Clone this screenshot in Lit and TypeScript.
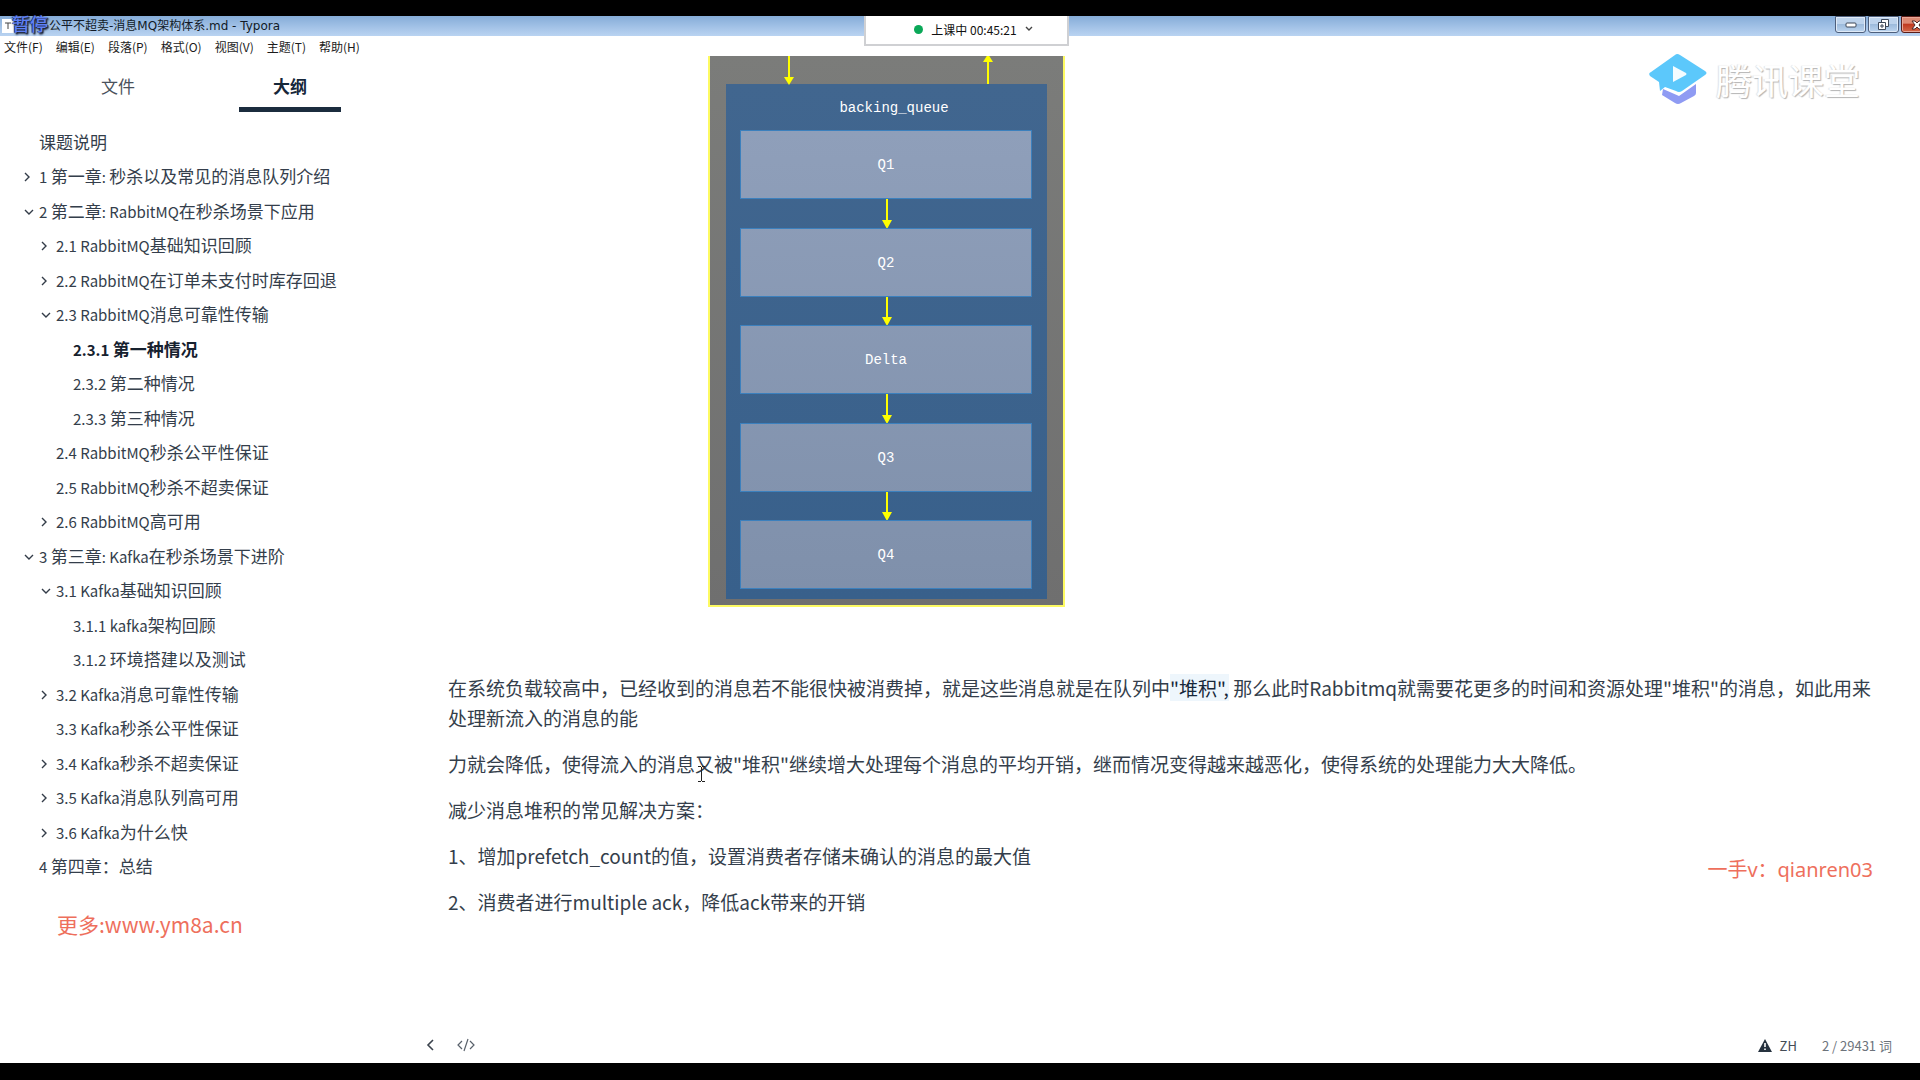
import { LitElement, html, svg, css, nothing } from "lit";
import { customElement } from "lit/decorators.js";
import { classMap } from "lit/directives/class-map.js";

type Fold = "open" | "closed" | "none";
interface OutlineItem {
  text: string;
  level: 0 | 1 | 2;
  fold: Fold;
  current?: boolean;
}

const item = (level: 0 | 1 | 2, fold: Fold, text: string, current = false): OutlineItem => ({ level, fold, text, current });

const OUTLINE: OutlineItem[] = [
  item(0, "none", "课题说明"),
  item(0, "closed", "1 第一章: 秒杀以及常见的消息队列介绍"),
  item(0, "open", "2 第二章: RabbitMQ在秒杀场景下应用"),
  item(1, "closed", "2.1 RabbitMQ基础知识回顾"),
  item(1, "closed", "2.2 RabbitMQ在订单未支付时库存回退"),
  item(1, "open", "2.3 RabbitMQ消息可靠性传输"),
  item(2, "none", "2.3.1 第一种情况", true),
  item(2, "none", "2.3.2 第二种情况"),
  item(2, "none", "2.3.3 第三种情况"),
  item(1, "none", "2.4 RabbitMQ秒杀公平性保证"),
  item(1, "none", "2.5 RabbitMQ秒杀不超卖保证"),
  item(1, "closed", "2.6 RabbitMQ高可用"),
  item(0, "open", "3 第三章: Kafka在秒杀场景下进阶"),
  item(1, "open", "3.1 Kafka基础知识回顾"),
  item(2, "none", "3.1.1 kafka架构回顾"),
  item(2, "none", "3.1.2 环境搭建以及测试"),
  item(1, "closed", "3.2 Kafka消息可靠性传输"),
  item(1, "none", "3.3 Kafka秒杀公平性保证"),
  item(1, "closed", "3.4 Kafka秒杀不超卖保证"),
  item(1, "closed", "3.5 Kafka消息队列高可用"),
  item(1, "closed", "3.6 Kafka为什么快"),
  item(0, "none", "4 第四章：总结"),
];

const MENUS = ["文件(F)", "编辑(E)", "段落(P)", "格式(O)", "视图(V)", "主题(T)", "帮助(H)"];

const QUEUES = [
  { name: "Q1", y: 74 },
  { name: "Q2", y: 172 },
  { name: "Delta", y: 269 },
  { name: "Q3", y: 367 },
  { name: "Q4", y: 464 },
];

/** Sets the Latin runs of an outline entry in their own, smaller size. */
const mixed = (text: string) =>
  text
    .split(/([\x20-\x7e]+)/)
    .filter((run) => run !== "")
    .map((run) => (/^[\x20-\x7e]/.test(run) ? html`<span class="latin">${run}</span>` : run));

@customElement("queue-diagram")
export class QueueDiagram extends LitElement {
  static styles = css`
    :host {
      display: block;
    }
    .diagram {
      display: block;
    }
    .label {
      font: 14px "Liberation Mono", monospace;
      fill: #fff;
      text-anchor: middle;
    }
  `;

  render() {
    return html`
      <svg class="diagram" width="357" height="551" viewBox="0 0 357 551" role="img" aria-label="backing_queue">
        <defs>
          <linearGradient id="outer" x1="0" y1="0" x2="0" y2="1">
            <stop offset="0" stop-color="#7b7c7a" />
            <stop offset="1" stop-color="#6f6f6f" />
          </linearGradient>
          <linearGradient id="inner" x1="0" y1="0" x2="0" y2="1">
            <stop offset="0" stop-color="#41668f" />
            <stop offset="1" stop-color="#38608b" />
          </linearGradient>
          <linearGradient id="cell" gradientUnits="userSpaceOnUse" x1="0" y1="74" x2="0" y2="533">
            <stop offset="0" stop-color="#8f9fba" />
            <stop offset="1" stop-color="#7f90ab" />
          </linearGradient>
        </defs>
        <rect width="357" height="551" fill="url(#outer)" />
        <path d="M1 0V550H356V0" fill="none" stroke="#fdfa62" stroke-width="2" />
        <rect x="18" y="28" width="321" height="515" fill="url(#inner)" />
        <path d="M81 0V22" stroke="#ff0" stroke-width="2" />
        <path d="M76 21H86L81 29Z" fill="#ff0" />
        <path d="M280 28V5" stroke="#ff0" stroke-width="2" />
        <path d="M275 6H285L280 -2Z" fill="#ff0" />
        <text class="label" x="186" y="56">backing_queue</text>
        ${QUEUES.map(
          (q, i) => svg`
            <rect x="32.500" y=${q.y + 0.5} width="291" height="68" fill="url(#cell)" stroke="#3c80bd" />
            <text class="label" x="178" y=${q.y + 39}>${q.name}</text>
            ${i < QUEUES.length - 1
              ? svg`
                <path d=${`M179 ${q.y + 69}V${QUEUES[i + 1].y - 7}`} stroke="#ff0" stroke-width="2" />
                <path d=${`M174 ${QUEUES[i + 1].y - 8}H184L179 ${QUEUES[i + 1].y + 1}Z`} fill="#ff0" />`
              : nothing}
          `,
        )}
      </svg>
    `;
  }
}

@customElement("app-root")
export class AppRoot extends LitElement {
  static styles = css`
    :host {
      display: block;
      font-family: "Noto Sans CJK SC", sans-serif;
      color: #343e4b;
    }
    button {
      font: inherit;
      color: inherit;
      background: none;
      border: 0;
      margin: 0;
      padding: 0;
    }
    a {
      color: inherit;
      text-decoration: none;
    }
    .screen {
      position: relative;
      display: flex;
      flex-direction: column;
      box-sizing: border-box;
      min-height: 100vh;
      padding: 16px 0 17px;
      background: #000;
      overflow: hidden;
    }
    .window {
      flex: 1;
      display: flex;
      flex-direction: column;
      background: #fff;
    }
    .titlebar {
      display: flex;
      align-items: center;
      height: 20px;
      padding-left: 1px;
      background: linear-gradient(to bottom, #85acd8, #a5c4e8 60%, #b9d3f1);
      color: #111a26;
      overflow: hidden;
    }
    .doc-icon {
      flex: none;
      margin-right: 34px;
    }
    .title {
      flex: 1;
      margin: 0;
      font: 12px/18px "DejaVu Sans", "Noto Sans CJK SC", sans-serif;
      white-space: nowrap;
    }
    .window-buttons {
      display: flex;
      gap: 2px;
      align-self: flex-start;
      margin-right: -12px;
    }
    .window-button {
      display: grid;
      place-items: center;
      box-sizing: border-box;
      width: 31px;
      height: 17px;
      border: 1px solid #4d5f7c;
      border-radius: 0 0 3px 3px;
      background: linear-gradient(to bottom, #bdd3ec 45%, #9dbbdc 50%, #bcd5f0);
      box-shadow: inset 0 0 0 1px #dfeaf7;
    }
    .close {
      background: linear-gradient(to bottom, #dd8a74 40%, #c03a20 50%, #d4694a);
      border-color: #5a1d18;
      box-shadow: inset 0 0 0 1px #e9a797;
    }
    .menubar {
      display: flex;
      gap: 13px;
      height: 20px;
      padding-left: 4px;
      color: #1b1b1b;
      font: 12px/22px "Noto Sans CJK SC", sans-serif;
    }
    .body {
      flex: 1;
      display: grid;
      grid-template-columns: 415px 1fr;
    }
    .sidebar {
      display: flex;
      flex-direction: column;
    }
    .tabs {
      display: flex;
      gap: 70px;
      padding-left: 67px;
      margin-bottom: 12px;
    }
    .tab {
      box-sizing: border-box;
      width: 102px;
      height: 56px;
      padding-top: 9px;
      border-bottom: 5px solid transparent;
      font-size: 17px;
      line-height: 24px;
      color: #4a525c;
    }
    .tab.active {
      color: #16273a;
      border-color: #1b2c3e;
      font-weight: 700;
    }
    .outline {
      list-style: none;
      margin: 0;
      padding: 0 0 0 24px;
      font-size: 17px;
    }
    .node {
      display: flex;
      align-items: center;
      height: 34px;
      white-space: nowrap;
    }
    .node:nth-child(even) {
      height: 35px;
    }
    .latin {
      font-size: 15px;
    }
    .level-1 {
      padding-left: 17px;
    }
    .level-2 {
      padding-left: 34px;
    }
    .fold {
      flex: none;
      display: flex;
      align-items: center;
      width: 15px;
      height: 20px;
      padding-top: 3px;
    }
    .current {
      font-weight: 700;
      color: #16212e;
    }
    .document {
      display: flex;
      flex-direction: column;
      min-width: 0;
    }
    .article {
      flex: 1;
      padding: 0 46px 0 33px;
      font-size: 19px;
      line-height: 30px;
    }
    .figure {
      margin: 0 0 66px 260px;
    }
    .paragraph {
      margin: 0 0 16px;
    }
    .mark {
      background: #eef6fc;
      color: #16273a;
    }
    .statusbar {
      display: flex;
      align-items: center;
      height: 36px;
      padding: 0 28px 0 3px;
      font-size: 13px;
      color: #444c55;
    }
    .tool {
      display: grid;
      place-items: center;
      width: 24px;
      height: 24px;
      margin-right: 12px;
    }
    .status-right {
      display: flex;
      align-items: center;
      gap: 8px;
      margin-left: auto;
    }
    .words {
      margin-left: 17px;
      color: #6c737b;
    }
    .lesson {
      position: absolute;
      top: 16px;
      left: 45%;
      display: flex;
      align-items: center;
      justify-content: center;
      gap: 8px;
      box-sizing: border-box;
      width: 205px;
      height: 30px;
      padding: 0 0 2px 14px;
      border: 2px solid #cfd0d3;
      border-top: 0;
      background: #fff;
      color: #111;
      font-size: 12px;
    }
    .dot {
      width: 9px;
      height: 9px;
      border-radius: 50%;
      background: #0aa858;
    }
    .paused {
      position: absolute;
      top: 11px;
      left: 12px;
      color: #5f80f5;
      font-size: 18px;
      line-height: 24px;
      font-weight: 500;
      text-shadow: 1px 1px 1px #1a2238, -1px 0 1px #1a2238, 1px 2px 2px #1a2238;
    }
    .brand {
      position: absolute;
      top: 53px;
      right: 60px;
      display: flex;
      align-items: center;
      gap: 8px;
      color: #fff;
      font-size: 36px;
      line-height: 52px;
      text-shadow: 1px 1px 1px #b4b4b4, -1px 0 1px #e2e2e2;
    }
    .promo {
      position: absolute;
      color: #ee6f5c;
    }
    .promo-left {
      left: 57px;
      bottom: 140px;
      font: 21px/32px "Noto Sans CJK SC", sans-serif;
    }
    .promo-right {
      right: 47px;
      bottom: 196px;
      font: 20px/28px "Noto Sans", "Noto Sans CJK SC", sans-serif;
    }
    .pointer {
      position: absolute;
      left: 697px;
      top: 765px;
    }
  `;

  private chevron(fold: Fold) {
    if (fold === "none") return html`<span class="fold"></span>`;
    const d = fold === "open" ? "M1 6L5 10L9 6" : "M1 4L5 8L1 12";
    return html`
      <button class="fold" aria-label=${fold === "open" ? "折叠" : "展开"}>
        <svg width="11" height="16" viewBox="0 0 11 16" fill="none" stroke="#333c48" stroke-width="1.4">
          <path d=${d} />
        </svg>
      </button>
    `;
  }

  render() {
    return html`
      <div class="screen">
        <div class="window">
          <header class="titlebar">
            <svg class="doc-icon" width="14" height="16" viewBox="0 0 14 16">
              <path d="M1 1H10L13 4V15H1Z" fill="#fff" />
              <path d="M4 5H10M7 5V11" stroke="#444" fill="none" />
            </svg>
            <h1 class="title">公平不超卖-消息MQ架构体系.md - Typora</h1>
            <div class="window-buttons">
              <button class="window-button" aria-label="最小化">
                <svg width="12" height="6" viewBox="0 0 12 6">
                  <rect x="1" y="1" width="10" height="4" rx="1" fill="#fff" stroke="#3c4757" />
                </svg>
              </button>
              <button class="window-button" aria-label="还原">
                <svg width="13" height="12" viewBox="0 0 13 12" fill="#fff" stroke="#3c4757">
                  <path d="M4.500 .5H11.500V7.500H4.500Z" />
                  <path d="M1.500 3.500H8.500V10.500H1.500Z" />
                  <path d="M4 6H6V8H4Z" />
                </svg>
              </button>
              <button class="window-button close" aria-label="关闭">
                <svg width="12" height="10" viewBox="0 0 12 10">
                  <path d="M1 1H4L6 3L8 1H11L8 5L11 9H8L6 7L4 9H1L4 5Z" fill="#fff" stroke="#4b2a2a" />
                </svg>
              </button>
            </div>
          </header>
          <nav class="menubar">${MENUS.map((m) => html`<button>${m}</button>`)}</nav>
          <div class="body">
            <aside class="sidebar">
              <div class="tabs" role="tablist">
                <button class="tab" role="tab" aria-selected="false">文件</button>
                <button class="tab active" role="tab" aria-selected="true">大纲</button>
              </div>
              <ul class="outline">
                ${OUTLINE.map(
                  (n) => html`
                    <li class=${classMap({ node: true, [`level-${n.level}`]: true, current: !!n.current })}>
                      ${this.chevron(n.fold)}<a href="#">${mixed(n.text)}</a>
                    </li>
                  `,
                )}
              </ul>
            </aside>
            <main class="document">
              <article class="article">
                <figure class="figure"><queue-diagram></queue-diagram></figure>
                <p class="paragraph">
                  在系统负载较高中，已经收到的消息若不能很快被消费掉，就是这些消息就是在队列中<span class="mark">"堆积",</span
                  >&nbsp;那么此时Rabbitmq就需要花更多的时间和资源处理"堆积"的消息，如此用来处理新流入的消息的能
                </p>
                <p class="paragraph">
                  力就会降低，使得流入的消息又被"堆积"继续增大处理每个消息的平均开销，继而情况变得越来越恶化，使得系统的处理能力大大降低。
                </p>
                <p class="paragraph">减少消息堆积的常见解决方案：</p>
                <p class="paragraph">1、增加prefetch_count的值，设置消费者存储未确认的消息的最大值</p>
                <p class="paragraph">2、消费者进行multiple ack，降低ack带来的开销</p>
              </article>
              <footer class="statusbar">
                <button class="tool" aria-label="返回">
                  <svg width="10" height="14" viewBox="0 0 10 14" fill="none" stroke="#3b434d" stroke-width="1.6">
                    <path d="M8 2L3 7L8 12" />
                  </svg>
                </button>
                <button class="tool" aria-label="源代码模式">
                  <svg width="20" height="14" viewBox="0 0 20 14" fill="none" stroke="#59616b" stroke-width="1.2">
                    <path d="M6 3L2 7L6 11M14 3L18 7L14 11M12 1L8 13" />
                  </svg>
                </button>
                <div class="status-right">
                  <svg width="14" height="13" viewBox="0 0 14 13">
                    <path d="M7 0L14 13H0Z" fill="#26323f" />
                    <path d="M7 4V8M7 9.500V11" stroke="#fff" stroke-width="1.6" />
                  </svg>
                  <span>ZH</span>
                  <span class="words">2 / 29431 词</span>
                </div>
              </footer>
            </main>
          </div>
        </div>

        <button class="lesson">
          <span class="dot"></span>
          <span>上课中 00:45:21</span>
          <svg width="8" height="6" viewBox="0 0 8 6" fill="none" stroke="#444" stroke-width="1.4">
            <path d="M1 1L4 4L7 1" />
          </svg>
        </button>
        <div class="paused">暂停</div>
        <div class="brand">
          <svg width="60" height="52" viewBox="0 0 60 52">
            <path d="M15 36L31 43L48 31V40Q48 42 46 43L33 50Q30 52 27 50L14 42Z" fill="#8f9bf3" />
            <path
              d="M27 2Q29 0 32 2L57 18Q60 20 57 22L34 38Q31 40 28 38L17 34L12 38L11 29L2 23Q0 20 3 19Z"
              fill="#5cc8fb"
            />
            <path d="M25 13L38 20Q39 21 38 22L25 29Z" fill="#f4fcff" />
          </svg>
          <span>腾讯课堂</span>
        </div>
        <div class="promo promo-left">更多:www.ym8a.cn</div>
        <div class="promo promo-right">一手v：qianren03</div>
        <svg class="pointer" width="9" height="18" viewBox="0 0 9 18" fill="none" stroke="#222">
          <path d="M1 1.500H4M5 1.500H8M4.500 2V16M1 16.500H4M5 16.500H8" />
        </svg>
      </div>
    `;
  }
}
